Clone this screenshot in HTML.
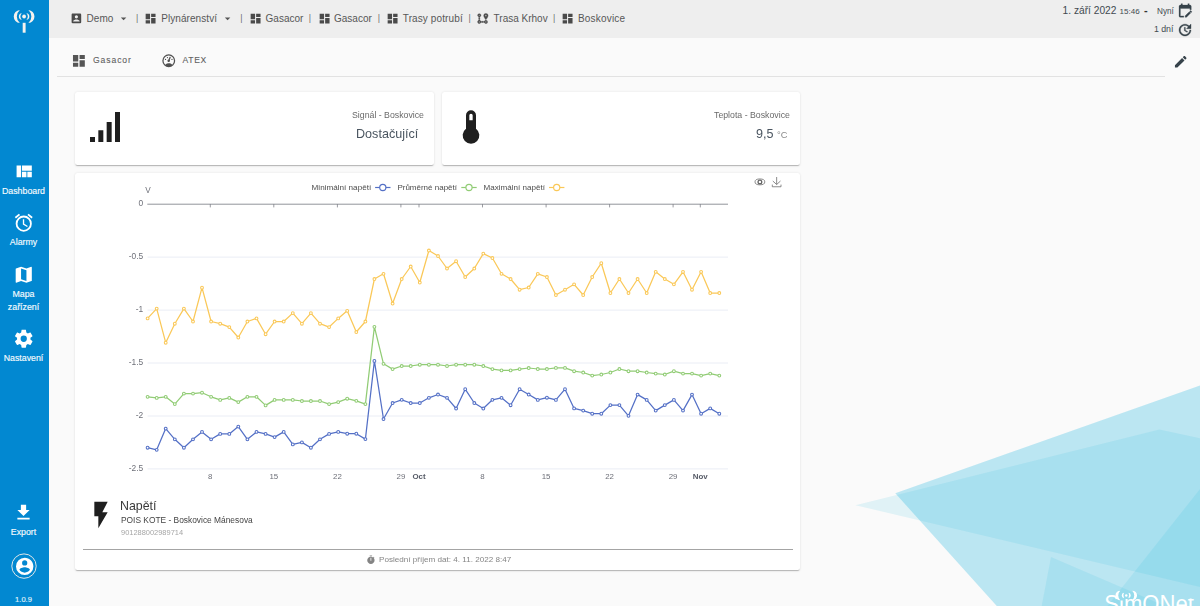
<!DOCTYPE html>
<html lang="cs">
<head>
<meta charset="utf-8">
<title>SimONet - Boskovice</title>
<style>
*{box-sizing:border-box;margin:0;padding:0}
html,body{width:1200px;height:606px;overflow:hidden;background:#fafafa;font-family:"Liberation Sans",sans-serif;color:#5f5f5f}
.abs{position:absolute;white-space:nowrap;line-height:1}
svg{display:block;position:absolute;overflow:visible}
#side{position:absolute;left:0;top:0;width:49px;height:606px;background:#0288d1}
#side .lbl{position:absolute;left:-1px;width:49px;text-align:center;color:#f6fbfe;font-size:8.8px;line-height:12px;white-space:nowrap;-webkit-text-stroke:.15px #f6fbfe}
#top{position:absolute;left:49px;top:0;width:1151px;height:38px;background:#eeeeee}
.bc{position:absolute;top:12.5px;font-size:10px;line-height:12px;color:#575757;white-space:nowrap}
.sep{position:absolute;top:11.9px;font-size:8.8px;line-height:12px;color:#707070;white-space:nowrap}
.g{will-change:transform}
.card{position:absolute;background:#fff;border-radius:2.5px;box-shadow:0 1.6px .8px -1.300px rgba(0,0,0,.14),0 1px 1.2px 0 rgba(0,0,0,.1),0 .5px 2.6px 0 rgba(0,0,0,.09)}
</style>
</head>
<body>
<!-- background polygons -->
<svg id="bg" width="1200" height="606" viewBox="0 0 1200 606" style="left:0;top:0">
  <polygon points="895.3,493.3 1200,385.4 1200,606 996.8,606" fill="rgba(0,172,220,.25)"/>
  <polygon points="855.4,505.2 1159.4,429.6 1200,438.2 1200,587" fill="rgba(0,172,220,.1)"/>
  <polygon points="1051,557 1165,606 1041.7,606" fill="rgba(0,172,220,.1)"/>
  <polygon points="1200,489 1107.4,606 1200,606" fill="rgba(0,172,220,.1)"/>
  <!-- logo -->
  <defs><clipPath id="lc">
    <rect x="1100" y="585" width="17.6" height="25"/>
    <rect x="1117.6" y="600.6" width="5.600" height="10"/>
    <rect x="1123.2" y="585" width="61.300" height="25"/>
    <rect x="1184.5" y="598.4" width="15.500" height="10"/>
  </clipPath></defs>
  <text x="1104.3" y="612.4" fill="#fff" font-family="Liberation Sans, sans-serif" font-size="23.4" textLength="89.6" lengthAdjust="spacingAndGlyphs" clip-path="url(#lc)">SimONet</text>
  <g fill="#fff">
  <circle cx="1126.25" cy="595.5" r="1.2"/>
  <path d="M1124.05 592.80A2.73 2.73 0 0 0 1124.05 598.20A4.96 4.96 0 0 1 1124.05 592.80Z"/>
  <path d="M1120.25 590.70A4.80 4.80 0 0 0 1120.25 600.30A6.76 6.76 0 0 1 1120.25 590.70Z"/>
  <path d="M1128.45 592.80A2.73 2.73 0 0 1 1128.45 598.20A4.96 4.96 0 0 0 1128.45 592.80Z"/>
  <path d="M1132.25 590.70A4.80 4.80 0 0 1 1132.25 600.30A6.76 6.76 0 0 0 1132.25 590.70Z"/>
  </g>
</svg>

<!-- sidebar -->
<div id="side">
  <svg width="49" height="38" viewBox="0 0 49 38" style="left:0;top:0">
    <g fill="#f6f2ee">
      <path d="M19.8 9.9A6.6235 6.6235 0 0 0 19.8 23.1A8.800 8.800 0 0 1 19.8 9.9Z"/>
      <path d="M28.4 9.9A6.6235 6.6235 0 0 1 28.4 23.1A8.800 8.800 0 0 0 28.4 9.9Z"/>
      <path d="M21.8 13.2A3.32 3.32 0 0 0 21.8 19.8A4.500 4.500 0 0 1 21.8 13.2Z"/>
      <path d="M26.4 13.2A3.32 3.32 0 0 1 26.4 19.8A4.500 4.500 0 0 0 26.4 13.2Z"/>
      <circle cx="24.1" cy="16.5" r="1.9"/>
      <rect x="22.7" y="22.8" width="2.9" height="9.900"/>
    </g>
  </svg>

  <svg width="21.5" height="21.5" viewBox="0 0 24 24" style="left:13px;top:161.2px"><path fill="#fff" d="M10,5V11H21V5M16,18H21V12H16M4,18H9V5H4M10,18H15V12H10V18Z"/></svg>
  <div class="lbl" style="top:184.5px">Dashboard</div>

  <svg width="21.5" height="21.5" viewBox="0 0 24 24" style="left:13.3px;top:211.8px"><path fill="#fff" d="M12,20A7,7 0 0,1 5,13A7,7 0 0,1 12,6A7,7 0 0,1 19,13A7,7 0 0,1 12,20M12,4A9,9 0 0,0 3,13A9,9 0 0,0 12,22A9,9 0 0,0 21,13A9,9 0 0,0 12,4M12.5,8H11V14L15.75,16.85L16.5,15.62L12.5,13.25V8M7.88,3.39L6.6,1.86L2,5.71L3.29,7.24L7.88,3.39M22,5.72L17.4,1.86L16.11,3.39L20.71,7.25L22,5.72Z"/></svg>
  <div class="lbl" style="top:236.3px">Alarmy</div>

  <svg width="21.5" height="21.5" viewBox="0 0 24 24" style="left:13px;top:263.6px"><path fill="#fff" d="M15,19L9,16.89V5L15,7.11M20.5,3C20.44,3 20.39,3 20.34,3L15,5.1L9,3L3.36,4.9C3.15,4.97 3,5.15 3,5.38V20.5A0.5,0.5 0 0,0 3.5,21C3.55,21 3.61,21 3.66,20.97L9,18.9L15,21L20.64,19.1C20.85,19 21,18.85 21,18.62V3.5A0.5,0.5 0 0,0 20.5,3Z"/></svg>
  <div class="lbl" style="top:287.8px;line-height:12.9px">Mapa<br>zařízení</div>

  <svg width="21.5" height="21.5" viewBox="0 0 24 24" style="left:13px;top:327.8px"><path fill="#fff" d="M12,15.5A3.5,3.5 0 0,1 8.5,12A3.5,3.5 0 0,1 12,8.5A3.5,3.5 0 0,1 15.5,12A3.5,3.5 0 0,1 12,15.5M19.43,12.97C19.47,12.65 19.5,12.33 19.5,12C19.5,11.67 19.47,11.34 19.43,11L21.54,9.37C21.73,9.22 21.78,8.95 21.66,8.73L19.66,5.27C19.54,5.05 19.27,4.96 19.05,5.05L16.56,6.05C16.04,5.66 15.5,5.32 14.87,5.07L14.5,2.42C14.46,2.18 14.25,2 14,2H10C9.75,2 9.54,2.18 9.5,2.42L9.13,5.07C8.5,5.32 7.96,5.66 7.44,6.05L4.95,5.05C4.73,4.96 4.46,5.05 4.34,5.27L2.34,8.73C2.21,8.95 2.27,9.22 2.46,9.37L4.57,11C4.53,11.34 4.5,11.67 4.5,12C4.5,12.33 4.53,12.65 4.57,12.97L2.46,14.63C2.27,14.78 2.21,15.05 2.34,15.27L4.34,18.73C4.46,18.95 4.73,19.03 4.95,18.95L7.44,17.94C7.96,18.34 8.5,18.68 9.13,18.93L9.5,21.58C9.54,21.82 9.75,22 10,22H14C14.25,22 14.46,21.82 14.5,21.58L14.87,18.93C15.5,18.67 16.04,18.34 16.56,17.94L19.05,18.95C19.27,19.03 19.54,18.95 19.66,18.73L21.66,15.27C21.78,15.05 21.73,14.78 21.54,14.63L19.43,12.97Z"/></svg>
  <div class="lbl" style="top:351.8px">Nastavení</div>

  <svg width="21" height="21" viewBox="0 0 24 24" style="left:13.3px;top:502.4px"><path fill="#fff" d="M5,20H19V18H5M19,9H15V3H9V9H5L12,16L19,9Z"/></svg>
  <div class="lbl" style="top:525.6px">Export</div>

  <svg width="26" height="26" viewBox="0 0 26 26" style="left:10.8px;top:553px">
    <circle cx="13" cy="13.1" r="12.2" fill="none" stroke="#dfe6e8" stroke-width="1"/>
    <g transform="translate(3.25 2.95) scale(0.87)"><path fill="#fff" d="M12,19.2C9.5,19.2 7.29,17.92 6,16C6.03,14 10,12.9 12,12.9C14,12.9 17.97,14 18,16C16.71,17.92 14.5,19.2 12,19.2M12,5A3,3 0 0,1 15,8A3,3 0 0,1 12,11A3,3 0 0,1 9,8A3,3 0 0,1 12,5M12,2A10,10 0 0,0 2,12A10,10 0 0,0 12,22A10,10 0 0,0 22,12C22,6.47 17.5,2 12,2Z"/></g>
  </svg>
  <div class="lbl" style="top:594px;font-size:7.6px;color:#d6ecf8">1.0.9</div>
</div>

<!-- top bar -->
<div id="top"></div>
<div id="crumbs">
  <svg width="12.8" height="12.8" viewBox="0 0 24 24" style="left:70.1px;top:11.6px"><path fill="#4a4a4a" d="M6,17C6,15 10,13.9 12,13.9C14,13.9 18,15 18,17V18H6M15,9A3,3 0 0,1 12,12A3,3 0 0,1 9,9A3,3 0 0,1 12,6A3,3 0 0,1 15,9M3,5V19A2,2 0 0,0 5,21H19A2,2 0 0,0 21,19V5A2,2 0 0,0 19,3H5C3.89,3 3,3.9 3,5Z"/></svg>
  <div class="bc" style="left:86.6px">Demo</div>
  <svg width="13.2" height="13.2" viewBox="0 0 24 24" style="left:116.8px;top:11.6px"><path fill="#555" d="M7,10L12,15L17,10H7Z"/></svg>
  <div class="sep" style="left:136.0px">|</div>
  <svg class="dash" width="13.2" height="13.2" viewBox="0 0 24 24" style="left:144.3px;top:12px"><path fill="#4a4a4a" d="M13,3V9H21V3M13,21H21V11H13M3,21H11V15H3M3,13H11V3H3V13Z"/></svg>
  <div class="bc" style="left:161.2px;letter-spacing:.07px">Plynárenství</div>
  <svg width="13.2" height="13.2" viewBox="0 0 24 24" style="left:221.1px;top:11.6px"><path fill="#555" d="M7,10L12,15L17,10H7Z"/></svg>
  <div class="sep" style="left:240.3px">|</div>
  <svg class="dash" width="13.2" height="13.2" viewBox="0 0 24 24" style="left:248.5px;top:12px"><path fill="#4a4a4a" d="M13,3V9H21V3M13,21H21V11H13M3,21H11V15H3M3,13H11V3H3V13Z"/></svg>
  <div class="bc" style="left:265.6px">Gasacor</div>
  <div class="sep" style="left:308.7px">|</div>
  <svg class="dash" width="13.2" height="13.2" viewBox="0 0 24 24" style="left:317.9px;top:12px"><path fill="#4a4a4a" d="M13,3V9H21V3M13,21H21V11H13M3,21H11V15H3M3,13H11V3H3V13Z"/></svg>
  <div class="bc" style="left:334px">Gasacor</div>
  <div class="sep" style="left:377.7px">|</div>
  <svg class="dash" width="13.2" height="13.2" viewBox="0 0 24 24" style="left:385.8px;top:12px"><path fill="#4a4a4a" d="M13,3V9H21V3M13,21H21V11H13M3,21H11V15H3M3,13H11V3H3V13Z"/></svg>
  <div class="bc" style="left:402.8px;letter-spacing:.11px">Trasy potrubí</div>
  <div class="sep" style="left:468.4px">|</div>
  <svg width="13.2" height="13.2" viewBox="0 0 24 24" style="left:476.3px;top:12px"><path fill="#4a4a4a" stroke="#4a4a4a" stroke-width=".7" d="M18,15A3,3 0 0,1 21,18A3,3 0 0,1 18,21C16.69,21 15.58,20.17 15.17,19H14V17H15.17C15.58,15.83 16.69,15 18,15M18,17A1,1 0 0,0 17,18A1,1 0 0,0 18,19A1,1 0 0,0 19,18A1,1 0 0,0 18,17M18,8A1.43,1.43 0 0,0 19.43,6.57C19.43,5.78 18.79,5.14 18,5.14C17.21,5.14 16.57,5.78 16.57,6.57A1.43,1.43 0 0,0 18,8M18,2.57A4,4 0 0,1 22,6.57C22,9.56 18,14 18,14C18,14 14,9.56 14,6.57A4,4 0 0,1 18,2.57M8.83,17H10V19H8.83C8.42,20.17 7.31,21 6,21A3,3 0 0,1 3,18C3,16.69 3.83,15.58 5,15.17V14H7V15.17C7.85,15.47 8.53,16.15 8.83,17M6,17A1,1 0 0,0 5,18A1,1 0 0,0 6,19A1,1 0 0,0 7,18A1,1 0 0,0 6,17M6,3A3,3 0 0,1 9,6C9,7.31 8.17,8.42 7,8.83V10H5V8.83C3.83,8.42 3,7.31 3,6A3,3 0 0,1 6,3M6,5A1,1 0 0,0 5,6A1,1 0 0,0 6,7A1,1 0 0,0 7,6A1,1 0 0,0 6,5M11,19V17H13V19H11M7,13H5V11H7V13Z"/></svg>
  <div class="bc" style="left:493.6px">Trasa Krhov</div>
  <div class="sep" style="left:553.0px">|</div>
  <svg class="dash" width="13.2" height="13.2" viewBox="0 0 24 24" style="left:561.3px;top:12px"><path fill="#4a4a4a" d="M13,3V9H21V3M13,21H21V11H13M3,21H11V15H3M3,13H11V3H3V13Z"/></svg>
  <div class="bc" style="left:578px;letter-spacing:.19px">Boskovice</div>
</div>

<!-- top right date -->
<div class="abs" style="left:1062.6px;top:5.6px;font-size:10.2px;color:#414a50">1. září 2022</div>
<div class="abs" style="left:1119.6px;top:7.6px;font-size:8px;color:#414a50">15:46</div>
<div class="abs" style="left:1144px;top:5.3px;font-size:11px;font-weight:bold;color:#333">-</div>
<div class="abs" style="left:1157px;top:7.7px;font-size:8.2px;color:#414a50">Nyní</div>
<svg width="16.3" height="16.3" viewBox="0 0 24 24" style="left:1177.2px;top:3px"><path fill="#36424a" stroke="#36424a" stroke-width=".4" d="M21.7 13.35L20.7 14.35L18.65 12.35L19.65 11.35C19.85 11.14 20.19 11.13 20.42 11.35L21.7 12.63C21.89 12.83 21.89 13.15 21.7 13.35M12 18.94L18.07 12.88L20.12 14.88L14.06 21H12V18.94M5 19H10V21H5C3.9 21 3 20.11 3 19V5C3 3.9 3.9 3 5 3H6V1H8V3H16V1H18V3H19C20.11 3 21 3.9 21 5V10H19V8.200H5V19Z"/></svg>
<div class="abs" style="left:1153.9px;top:25.2px;font-size:8.8px;color:#414a50">1 dní</div>
<svg width="16" height="16" viewBox="0 0 24 24" style="left:1176.9px;top:21.5px"><path fill="#36424a" stroke="#36424a" stroke-width=".5" d="M21,10.12H14.22L16.96,7.3C14.23,4.6 9.81,4.5 7.08,7.2C4.35,9.91 4.35,14.28 7.08,17C9.81,19.7 14.23,19.7 16.96,17C18.32,15.65 19,14.08 19,12.1H21C21,14.08 20.12,16.65 18.36,18.39C14.85,21.87 9.15,21.87 5.64,18.39C2.14,14.92 2.11,9.28 5.62,5.81C9.13,2.34 14.76,2.34 18.27,5.81L21,3V10.12M12.5,8V12.25L16,14.33L15.28,15.54L11,13V8H12.5Z"/></svg>

<!-- tabs -->
<div style="position:absolute;left:57px;top:76px;width:1108px;height:1px;background:#e2e2e2"></div>
<svg width="15.8" height="15.8" viewBox="0 0 24 24" style="left:71.1px;top:53px"><path fill="#555" d="M13,3V9H21V3M13,21H21V11H13M3,21H11V15H3M3,13H11V3H3V13Z"/></svg>
<div class="abs" style="left:93px;top:56.2px;font-size:8.6px;letter-spacing:.9px;color:#606060;-webkit-text-stroke:.08px #606060">Gasacor</div>
<svg width="15.5" height="15.5" viewBox="0 0 24 24" style="left:161px;top:53.3px"><path fill="#505050" d="M12,2A10,10 0 0,0 2,12A10,10 0 0,0 12,22A10,10 0 0,0 22,12A10,10 0 0,0 12,2M12,4A8,8 0 0,1 20,12C20,14.4 19,16.5 17.3,18C15.9,16.7 14,16 12,16C10,16 8.2,16.7 6.7,18C5,16.5 4,14.4 4,12A8,8 0 0,1 12,4M14,5.89C13.62,5.9 13.26,6.15 13.1,6.54L11.81,9.77L11.71,10C11,10.13 10.41,10.6 10.14,11.26C9.73,12.29 10.23,13.45 11.26,13.86C12.29,14.27 13.45,13.77 13.86,12.74C14.12,12.08 14,11.32 13.57,10.76L13.67,10.5L14.96,7.29L14.97,7.26C15.17,6.75 14.92,6.17 14.41,5.96C14.28,5.91 14.15,5.89 14,5.89M10,6A1,1 0 0,0 9,7A1,1 0 0,0 10,8A1,1 0 0,0 11,7A1,1 0 0,0 10,6M7,9A1,1 0 0,0 6,10A1,1 0 0,0 7,11A1,1 0 0,0 8,10A1,1 0 0,0 7,9M17,9A1,1 0 0,0 16,10A1,1 0 0,0 17,11A1,1 0 0,0 18,10A1,1 0 0,0 17,9Z"/></svg>
<div class="abs" style="left:182.4px;top:56.2px;font-size:8.6px;letter-spacing:.7px;color:#606060;-webkit-text-stroke:.08px #606060">ATEX</div>
<svg width="15.5" height="15.5" viewBox="0 0 24 24" style="left:1172.5px;top:53.7px"><path fill="#36424a" d="M20.71,7.04C21.1,6.65 21.1,6 20.71,5.63L18.37,3.29C18,2.9 17.35,2.9 16.96,3.29L15.12,5.12L18.87,8.87M3,17.25V21H6.75L17.81,9.93L14.06,6.18L3,17.25Z"/></svg>

<!-- card 1: signal -->
<div class="card" style="left:75px;top:92px;width:359px;height:73px"></div>
<svg width="40" height="40" viewBox="0 0 24 24" style="left:85px;top:107.100px"><path fill="#1f1f1f" d="M3,21H6V18H3M8,21H11V14H8M13,21H16V9H13M18,21H21V3H18V21Z"/></svg>
<div class="abs g" style="right:776px;top:111.4px;font-size:8.75px;color:#6a6a6a">Signál - Boskovice</div>
<div class="abs g" style="right:782px;top:128.300px;font-size:12.6px;color:#4a5560">Dostačující</div>

<!-- card 2: temperature -->
<div class="card" style="left:441.5px;top:92px;width:358.5px;height:73px"></div>
<svg width="40" height="40" viewBox="0 0 24 24" style="left:451.3px;top:106.6px"><path fill="#1f1f1f" d="M15 13V5A3 3 0 0 0 9 5V13A5 5 0 1 0 15 13M12 4A1 1 0 0 1 13 5V8H11V5A1 1 0 0 1 12 4Z"/></svg>
<div class="abs g" style="right:410px;top:111.4px;font-size:8.75px;color:#6a6a6a">Teplota - Boskovice</div>
<div class="abs g" style="right:412.6px;top:128.300px;font-size:12.6px;color:#4a5560">9,5 <span style="font-size:9.3px;color:#8a8a8a">°C</span></div>

<!-- card 3: chart -->
<div class="card" style="left:75px;top:172.6px;width:725px;height:397.2px"></div>
<!--CHART-START-->
<svg id="chart" width="725" height="330" viewBox="75 172 725 330" style="left:75px;top:172px;will-change:transform">
<line x1="147.6" x2="728" y1="257.1" y2="257.1" stroke="#e3e7f2" stroke-width="0.75"/>
<line x1="147.6" x2="728" y1="310.1" y2="310.1" stroke="#e3e7f2" stroke-width="0.75"/>
<line x1="147.6" x2="728" y1="363.0" y2="363.0" stroke="#e3e7f2" stroke-width="0.75"/>
<line x1="147.6" x2="728" y1="416.0" y2="416.0" stroke="#e3e7f2" stroke-width="0.75"/>
<line x1="147.6" x2="728" y1="468.9" y2="468.9" stroke="#e3e7f2" stroke-width="0.75"/>
<line x1="147.3" x2="728" y1="204.2" y2="204.2" stroke="#6e7079" stroke-width="0.75"/>
<line x1="210.3" x2="210.3" y1="204.2" y2="207.4" stroke="#6e7079" stroke-width="0.7"/>
<line x1="273.8" x2="273.8" y1="204.2" y2="207.4" stroke="#6e7079" stroke-width="0.7"/>
<line x1="337.4" x2="337.4" y1="204.2" y2="207.4" stroke="#6e7079" stroke-width="0.7"/>
<line x1="400.9" x2="400.9" y1="204.2" y2="207.4" stroke="#6e7079" stroke-width="0.7"/>
<line x1="419.0" x2="419.0" y1="204.2" y2="207.4" stroke="#6e7079" stroke-width="0.7"/>
<line x1="482.5" x2="482.5" y1="204.2" y2="207.4" stroke="#6e7079" stroke-width="0.7"/>
<line x1="546.1" x2="546.1" y1="204.2" y2="207.4" stroke="#6e7079" stroke-width="0.7"/>
<line x1="609.6" x2="609.6" y1="204.2" y2="207.4" stroke="#6e7079" stroke-width="0.7"/>
<line x1="673.1" x2="673.1" y1="204.2" y2="207.4" stroke="#6e7079" stroke-width="0.7"/>
<line x1="700.3" x2="700.3" y1="204.2" y2="207.4" stroke="#6e7079" stroke-width="0.7"/>
<g font-family="Liberation Sans, sans-serif" font-size="8.4" fill="#6e7079" text-anchor="end">
<text x="143.2" y="206.4">0</text>
<text x="143.2" y="259.3">-0.5</text>
<text x="143.2" y="312.3">-1</text>
<text x="143.2" y="365.2">-1.5</text>
<text x="143.2" y="418.2">-2</text>
<text x="143.2" y="471.1">-2.5</text>
</g>
<text x="147.9" y="192.5" font-family="Liberation Sans, sans-serif" font-size="8.2" fill="#6e7079" text-anchor="middle">V</text>
<g font-family="Liberation Sans, sans-serif" font-size="7.9" fill="#6e7079" text-anchor="middle">
<text x="210.3" y="479.4">8</text>
<text x="273.8" y="479.4">15</text>
<text x="337.4" y="479.4">22</text>
<text x="400.9" y="479.4">29</text>
<text x="419.0" y="479.4" font-weight="bold" fill="#555a66">Oct</text>
<text x="482.5" y="479.4">8</text>
<text x="546.1" y="479.4">15</text>
<text x="609.6" y="479.4">22</text>
<text x="673.1" y="479.4">29</text>
<text x="700.3" y="479.4" font-weight="bold" fill="#555a66">Nov</text>
</g>
<g font-family="Liberation Sans, sans-serif" font-size="7.6" fill="#4c4c4c">
<text x="311.6" y="189.5" textLength="59.6" lengthAdjust="spacingAndGlyphs">Minimální napětí</text>
<line x1="375.1" x2="390.5" y1="187.5" y2="187.5" stroke="#5470c6" stroke-width="1.2"/>
<circle cx="382.8" cy="187.5" r="3.1" fill="#fff" stroke="#5470c6" stroke-width="1.15"/>
<text x="397.4" y="189.5" textLength="59.6" lengthAdjust="spacingAndGlyphs">Průměrné napětí</text>
<line x1="461.3" x2="476.7" y1="187.5" y2="187.5" stroke="#91cc75" stroke-width="1.2"/>
<circle cx="469.0" cy="187.5" r="3.1" fill="#fff" stroke="#91cc75" stroke-width="1.15"/>
<text x="483.5" y="189.5" textLength="61.4" lengthAdjust="spacingAndGlyphs">Maximální napětí</text>
<line x1="549" x2="564.4" y1="187.5" y2="187.5" stroke="#fac858" stroke-width="1.2"/>
<circle cx="556.7" cy="187.5" r="3.1" fill="#fff" stroke="#fac858" stroke-width="1.15"/>
</g>
<g fill="none" stroke="#666" stroke-width="0.75">
<ellipse cx="759.9" cy="181.9" rx="4.9" ry="2.950"/>
<circle cx="759.9" cy="181.9" r="1.850" stroke-width="1.3"/>
<path d="M776.65 177v7.400M772.800 181l3.850 3.500l3.850-3.500M772.300 184.600v2.150h8.700v-2.150"/>
</g>
<polyline points="147.6,447.7 156.7,449.8 165.7,428.6 174.8,439.3 183.9,447.7 193.0,439.3 202.0,431.9 211.1,439.3 220.2,433.9 229.3,433.9 238.3,426.6 247.4,439.3 256.5,431.9 265.6,433.9 274.6,437.1 283.7,431.9 292.8,444.4 301.9,442.4 310.9,447.7 320.0,439.3 329.1,433.9 338.2,431.9 347.2,433.7 356.3,433.7 365.4,439.1 374.4,360.9 383.5,419.0 392.6,403.0 401.7,399.8 410.7,403.0 419.8,403.0 428.9,397.8 438.0,394.5 447.0,397.8 456.1,408.5 465.2,389.2 474.3,403.0 483.3,408.5 492.4,399.8 501.5,397.8 510.6,405.2 519.6,389.2 528.7,394.5 537.8,399.9 546.9,397.7 555.9,399.9 565.0,389.2 574.1,408.4 583.2,410.6 592.2,413.7 601.3,413.7 610.4,405.1 619.4,405.1 628.5,415.8 637.6,394.6 646.7,399.9 655.7,410.6 664.8,405.1 673.9,399.9 683.0,410.6 692.0,394.6 701.1,413.7 710.2,408.4 719.3,413.7" fill="none" stroke="#5470c6" stroke-width="1.25" stroke-linejoin="bevel"/>
<g fill="#fff" stroke="#5470c6" stroke-width="1.05">
<circle cx="147.6" cy="447.7" r="1.4"/><circle cx="156.7" cy="449.8" r="1.4"/><circle cx="165.7" cy="428.6" r="1.4"/><circle cx="174.8" cy="439.3" r="1.4"/><circle cx="183.9" cy="447.7" r="1.4"/><circle cx="193.0" cy="439.3" r="1.4"/><circle cx="202.0" cy="431.9" r="1.4"/><circle cx="211.1" cy="439.3" r="1.4"/><circle cx="220.2" cy="433.9" r="1.4"/><circle cx="229.3" cy="433.9" r="1.4"/><circle cx="238.3" cy="426.6" r="1.4"/><circle cx="247.4" cy="439.3" r="1.4"/><circle cx="256.5" cy="431.9" r="1.4"/><circle cx="265.6" cy="433.9" r="1.4"/><circle cx="274.6" cy="437.1" r="1.4"/><circle cx="283.7" cy="431.9" r="1.4"/><circle cx="292.8" cy="444.4" r="1.4"/><circle cx="301.9" cy="442.4" r="1.4"/><circle cx="310.9" cy="447.7" r="1.4"/><circle cx="320.0" cy="439.3" r="1.4"/><circle cx="329.1" cy="433.9" r="1.4"/><circle cx="338.2" cy="431.9" r="1.4"/><circle cx="347.2" cy="433.7" r="1.4"/><circle cx="356.3" cy="433.7" r="1.4"/><circle cx="365.4" cy="439.1" r="1.4"/><circle cx="374.4" cy="360.9" r="1.4"/><circle cx="383.5" cy="419.0" r="1.4"/><circle cx="392.6" cy="403.0" r="1.4"/><circle cx="401.7" cy="399.8" r="1.4"/><circle cx="410.7" cy="403.0" r="1.4"/><circle cx="419.8" cy="403.0" r="1.4"/><circle cx="428.9" cy="397.8" r="1.4"/><circle cx="438.0" cy="394.5" r="1.4"/><circle cx="447.0" cy="397.8" r="1.4"/><circle cx="456.1" cy="408.5" r="1.4"/><circle cx="465.2" cy="389.2" r="1.4"/><circle cx="474.3" cy="403.0" r="1.4"/><circle cx="483.3" cy="408.5" r="1.4"/><circle cx="492.4" cy="399.8" r="1.4"/><circle cx="501.5" cy="397.8" r="1.4"/><circle cx="510.6" cy="405.2" r="1.4"/><circle cx="519.6" cy="389.2" r="1.4"/><circle cx="528.7" cy="394.5" r="1.4"/><circle cx="537.8" cy="399.9" r="1.4"/><circle cx="546.9" cy="397.7" r="1.4"/><circle cx="555.9" cy="399.9" r="1.4"/><circle cx="565.0" cy="389.2" r="1.4"/><circle cx="574.1" cy="408.4" r="1.4"/><circle cx="583.2" cy="410.6" r="1.4"/><circle cx="592.2" cy="413.7" r="1.4"/><circle cx="601.3" cy="413.7" r="1.4"/><circle cx="610.4" cy="405.1" r="1.4"/><circle cx="619.4" cy="405.1" r="1.4"/><circle cx="628.5" cy="415.8" r="1.4"/><circle cx="637.6" cy="394.6" r="1.4"/><circle cx="646.7" cy="399.9" r="1.4"/><circle cx="655.7" cy="410.6" r="1.4"/><circle cx="664.8" cy="405.1" r="1.4"/><circle cx="673.9" cy="399.9" r="1.4"/><circle cx="683.0" cy="410.6" r="1.4"/><circle cx="692.0" cy="394.6" r="1.4"/><circle cx="701.1" cy="413.7" r="1.4"/><circle cx="710.2" cy="408.4" r="1.4"/><circle cx="719.3" cy="413.7" r="1.4"/>
</g>
<polyline points="147.6,396.8 156.7,397.9 165.7,396.8 174.8,404.1 183.9,393.6 193.0,393.6 202.0,392.7 211.1,396.8 220.2,399.9 229.3,397.9 238.3,402.1 247.4,396.8 256.5,396.8 265.6,405.4 274.6,399.9 283.7,399.9 292.8,399.9 301.9,401.0 310.9,401.0 320.0,401.0 329.1,404.1 338.2,402.1 347.2,398.7 356.3,400.8 365.4,404.1 374.4,326.8 383.5,363.8 392.6,369.1 401.7,366.0 410.7,366.0 419.8,364.7 428.9,364.7 438.0,364.7 447.0,366.0 456.1,364.7 465.2,364.7 474.3,364.7 483.3,366.0 492.4,369.1 501.5,370.4 510.6,370.4 519.6,369.1 528.7,368.0 537.8,369.0 546.9,369.0 555.9,367.9 565.0,367.9 574.1,371.2 583.2,372.5 592.2,375.6 601.3,374.5 610.4,372.5 619.4,369.0 628.5,371.2 637.6,371.2 646.7,372.5 655.7,373.6 664.8,374.5 673.9,371.2 683.0,373.6 692.0,373.6 701.1,375.6 710.2,373.6 719.3,375.6" fill="none" stroke="#91cc75" stroke-width="1.25" stroke-linejoin="bevel"/>
<g fill="#fff" stroke="#91cc75" stroke-width="1.05">
<circle cx="147.6" cy="396.8" r="1.4"/><circle cx="156.7" cy="397.9" r="1.4"/><circle cx="165.7" cy="396.8" r="1.4"/><circle cx="174.8" cy="404.1" r="1.4"/><circle cx="183.9" cy="393.6" r="1.4"/><circle cx="193.0" cy="393.6" r="1.4"/><circle cx="202.0" cy="392.7" r="1.4"/><circle cx="211.1" cy="396.8" r="1.4"/><circle cx="220.2" cy="399.9" r="1.4"/><circle cx="229.3" cy="397.9" r="1.4"/><circle cx="238.3" cy="402.1" r="1.4"/><circle cx="247.4" cy="396.8" r="1.4"/><circle cx="256.5" cy="396.8" r="1.4"/><circle cx="265.6" cy="405.4" r="1.4"/><circle cx="274.6" cy="399.9" r="1.4"/><circle cx="283.7" cy="399.9" r="1.4"/><circle cx="292.8" cy="399.9" r="1.4"/><circle cx="301.9" cy="401.0" r="1.4"/><circle cx="310.9" cy="401.0" r="1.4"/><circle cx="320.0" cy="401.0" r="1.4"/><circle cx="329.1" cy="404.1" r="1.4"/><circle cx="338.2" cy="402.1" r="1.4"/><circle cx="347.2" cy="398.7" r="1.4"/><circle cx="356.3" cy="400.8" r="1.4"/><circle cx="365.4" cy="404.1" r="1.4"/><circle cx="374.4" cy="326.8" r="1.4"/><circle cx="383.5" cy="363.8" r="1.4"/><circle cx="392.6" cy="369.1" r="1.4"/><circle cx="401.7" cy="366.0" r="1.4"/><circle cx="410.7" cy="366.0" r="1.4"/><circle cx="419.8" cy="364.7" r="1.4"/><circle cx="428.9" cy="364.7" r="1.4"/><circle cx="438.0" cy="364.7" r="1.4"/><circle cx="447.0" cy="366.0" r="1.4"/><circle cx="456.1" cy="364.7" r="1.4"/><circle cx="465.2" cy="364.7" r="1.4"/><circle cx="474.3" cy="364.7" r="1.4"/><circle cx="483.3" cy="366.0" r="1.4"/><circle cx="492.4" cy="369.1" r="1.4"/><circle cx="501.5" cy="370.4" r="1.4"/><circle cx="510.6" cy="370.4" r="1.4"/><circle cx="519.6" cy="369.1" r="1.4"/><circle cx="528.7" cy="368.0" r="1.4"/><circle cx="537.8" cy="369.0" r="1.4"/><circle cx="546.9" cy="369.0" r="1.4"/><circle cx="555.9" cy="367.9" r="1.4"/><circle cx="565.0" cy="367.9" r="1.4"/><circle cx="574.1" cy="371.2" r="1.4"/><circle cx="583.2" cy="372.5" r="1.4"/><circle cx="592.2" cy="375.6" r="1.4"/><circle cx="601.3" cy="374.5" r="1.4"/><circle cx="610.4" cy="372.5" r="1.4"/><circle cx="619.4" cy="369.0" r="1.4"/><circle cx="628.5" cy="371.2" r="1.4"/><circle cx="637.6" cy="371.2" r="1.4"/><circle cx="646.7" cy="372.5" r="1.4"/><circle cx="655.7" cy="373.6" r="1.4"/><circle cx="664.8" cy="374.5" r="1.4"/><circle cx="673.9" cy="371.2" r="1.4"/><circle cx="683.0" cy="373.6" r="1.4"/><circle cx="692.0" cy="373.6" r="1.4"/><circle cx="701.1" cy="375.6" r="1.4"/><circle cx="710.2" cy="373.6" r="1.4"/><circle cx="719.3" cy="375.6" r="1.4"/>
</g>
<polyline points="147.6,318.4 156.7,308.6 165.7,342.7 174.8,323.7 183.9,308.6 193.0,321.5 202.0,287.7 211.1,321.5 220.2,323.7 229.3,327.1 238.3,337.5 247.4,321.5 256.5,318.4 265.6,334.2 274.6,321.5 283.7,321.5 292.8,313.1 301.9,323.7 310.9,313.1 320.0,323.7 329.1,327.1 338.2,318.4 347.2,310.8 356.3,332.0 365.4,321.5 374.4,279.0 383.5,273.8 392.6,303.5 401.7,279.0 410.7,266.5 419.8,282.5 428.9,250.5 438.0,256.0 447.0,268.5 456.1,261.2 465.2,277.0 474.3,268.5 483.3,253.6 492.4,258.0 501.5,273.8 510.6,279.0 519.6,289.7 528.7,287.5 537.8,273.8 546.9,277.0 555.9,295.0 565.0,289.7 574.1,284.3 583.2,295.0 592.2,277.0 601.3,263.2 610.4,293.0 619.4,279.0 628.5,293.0 637.6,279.0 646.7,293.0 655.7,271.8 664.8,279.0 673.9,284.3 683.0,271.8 692.0,289.7 701.1,271.8 710.2,293.0 719.3,293.0" fill="none" stroke="#fac858" stroke-width="1.25" stroke-linejoin="bevel"/>
<g fill="#fff" stroke="#fac858" stroke-width="1.05">
<circle cx="147.6" cy="318.4" r="1.4"/><circle cx="156.7" cy="308.6" r="1.4"/><circle cx="165.7" cy="342.7" r="1.4"/><circle cx="174.8" cy="323.7" r="1.4"/><circle cx="183.9" cy="308.6" r="1.4"/><circle cx="193.0" cy="321.5" r="1.4"/><circle cx="202.0" cy="287.7" r="1.4"/><circle cx="211.1" cy="321.5" r="1.4"/><circle cx="220.2" cy="323.7" r="1.4"/><circle cx="229.3" cy="327.1" r="1.4"/><circle cx="238.3" cy="337.5" r="1.4"/><circle cx="247.4" cy="321.5" r="1.4"/><circle cx="256.5" cy="318.4" r="1.4"/><circle cx="265.6" cy="334.2" r="1.4"/><circle cx="274.6" cy="321.5" r="1.4"/><circle cx="283.7" cy="321.5" r="1.4"/><circle cx="292.8" cy="313.1" r="1.4"/><circle cx="301.9" cy="323.7" r="1.4"/><circle cx="310.9" cy="313.1" r="1.4"/><circle cx="320.0" cy="323.7" r="1.4"/><circle cx="329.1" cy="327.1" r="1.4"/><circle cx="338.2" cy="318.4" r="1.4"/><circle cx="347.2" cy="310.8" r="1.4"/><circle cx="356.3" cy="332.0" r="1.4"/><circle cx="365.4" cy="321.5" r="1.4"/><circle cx="374.4" cy="279.0" r="1.4"/><circle cx="383.5" cy="273.8" r="1.4"/><circle cx="392.6" cy="303.5" r="1.4"/><circle cx="401.7" cy="279.0" r="1.4"/><circle cx="410.7" cy="266.5" r="1.4"/><circle cx="419.8" cy="282.5" r="1.4"/><circle cx="428.9" cy="250.5" r="1.4"/><circle cx="438.0" cy="256.0" r="1.4"/><circle cx="447.0" cy="268.5" r="1.4"/><circle cx="456.1" cy="261.2" r="1.4"/><circle cx="465.2" cy="277.0" r="1.4"/><circle cx="474.3" cy="268.5" r="1.4"/><circle cx="483.3" cy="253.6" r="1.4"/><circle cx="492.4" cy="258.0" r="1.4"/><circle cx="501.5" cy="273.8" r="1.4"/><circle cx="510.6" cy="279.0" r="1.4"/><circle cx="519.6" cy="289.7" r="1.4"/><circle cx="528.7" cy="287.5" r="1.4"/><circle cx="537.8" cy="273.8" r="1.4"/><circle cx="546.9" cy="277.0" r="1.4"/><circle cx="555.9" cy="295.0" r="1.4"/><circle cx="565.0" cy="289.7" r="1.4"/><circle cx="574.1" cy="284.3" r="1.4"/><circle cx="583.2" cy="295.0" r="1.4"/><circle cx="592.2" cy="277.0" r="1.4"/><circle cx="601.3" cy="263.2" r="1.4"/><circle cx="610.4" cy="293.0" r="1.4"/><circle cx="619.4" cy="279.0" r="1.4"/><circle cx="628.5" cy="293.0" r="1.4"/><circle cx="637.6" cy="279.0" r="1.4"/><circle cx="646.7" cy="293.0" r="1.4"/><circle cx="655.7" cy="271.8" r="1.4"/><circle cx="664.8" cy="279.0" r="1.4"/><circle cx="673.9" cy="284.3" r="1.4"/><circle cx="683.0" cy="271.8" r="1.4"/><circle cx="692.0" cy="289.7" r="1.4"/><circle cx="701.1" cy="271.8" r="1.4"/><circle cx="710.2" cy="293.0" r="1.4"/><circle cx="719.3" cy="293.0" r="1.4"/>
</g>
</svg>
<!--CHART-END-->

<!-- chart footer -->
<svg width="32" height="32" viewBox="0 0 24 24" style="left:85.3px;top:498.9px"><path fill="#1f1f1f" d="M7,2V13H10V22L17,10H13L17,2H7Z"/></svg>
<div class="abs g" style="left:120.4px;top:499.8px;font-size:12.4px;color:#3a3a3a">Napětí</div>
<div class="abs g" style="left:120.6px;top:515.6px;font-size:8.4px;color:#444">POIS KOTE - Boskovice Mánesova</div>
<div class="abs g" style="left:120.6px;top:529.300px;font-size:7.45px;color:#a6a6a6">901288002989714</div>
<div style="position:absolute;left:83px;top:548.6px;width:710px;height:1px;background:#a4a4a4"></div>
<svg width="9.8" height="9.8" viewBox="0 0 24 24" style="left:365.5px;top:554.5px"><path fill="#848484" d="M19.03 7.39L20.45 5.97C20 5.46 19.55 5 19.04 4.56L17.62 6C16.07 4.74 14.12 4 12 4C7.03 4 3 8.03 3 13S7.03 22 12 22C17 22 21 17.97 21 13C21 10.88 20.26 8.93 19.03 7.39M13 14H11V7H13V14M15 1H9V3H15V1Z"/></svg>
<div class="abs g" style="left:378.6px;top:555.9px;font-size:8.1px;color:#858585">Poslední příjem dat: 4. 11. 2022 8:47</div>
</body>
</html>
